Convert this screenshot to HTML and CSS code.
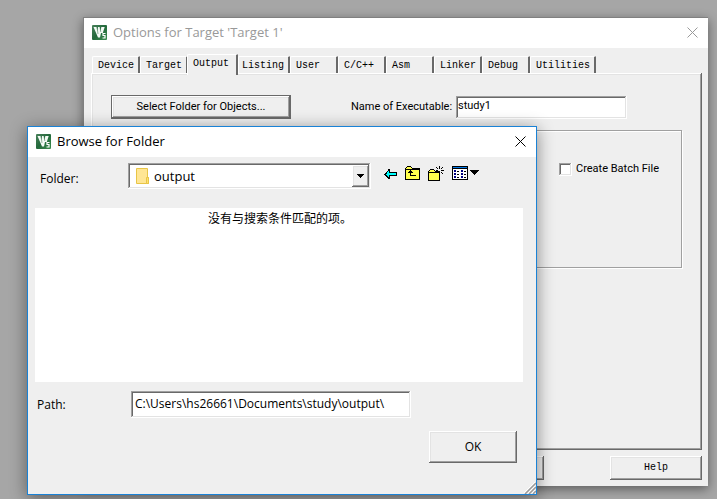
FILE: index.html
```html
<!DOCTYPE html>
<html lang="en">
<head>
<meta charset="utf-8">
<title>Options for Target</title>
<link rel="stylesheet" href="styles.css">
</head>
<body>
<svg class="defs" width="0" height="0" aria-hidden="true">
  <defs>
    <linearGradient id="green" x1="0" y1="0" x2="1" y2="1"><stop offset="0" stop-color="#48805a"/><stop offset=".5" stop-color="#23693b"/><stop offset="1" stop-color="#3d8f50"/></linearGradient>
    <symbol id="logo" viewBox="0 0 15 15">
      <rect width="15" height="15" rx="1" fill="url(#green)"/>
      <path fill="#f4faf5" d="M1.500 2h3.200l.5 4 .8-4h1.800l.9 4 .6-4h3.400L10.800 8H9l-1 4.500H6z"/>
      <path fill="none" stroke="#2c6d42" stroke-width=".5" d="M5 2l1 7M8 2l.8 5"/>
      <path fill="none" stroke="#fff" stroke-width="1.200" d="M13.500 8.500h-2.500v2h2v2.500h-2.500"/>
    </symbol>
  </defs>
</svg>
<main class="desktop">
  <section class="window options">
    <header class="titlebar">
      <svg class="logo" width="15" height="15" aria-hidden="true"><use href="#logo"/></svg>
      <h1 class="title">Options for Target 'Target 1'</h1>
      <button class="close" aria-label="Close"><svg width="11" height="11" viewBox="0 0 11 11"><path d="M.5.5l10 10M10.500.5l-10 10"/></svg></button>
    </header>
    <div class="tabs" role="tablist">
      <button class="tab" role="tab">Device</button>
      <button class="tab" role="tab">Target</button>
      <button class="tab active" role="tab" aria-selected="true">Output</button>
      <button class="tab listing" role="tab">Listing</button>
      <button class="tab" role="tab">User</button>
      <button class="tab" role="tab">C/C++</button>
      <button class="tab" role="tab">Asm</button>
      <button class="tab" role="tab">Linker</button>
      <button class="tab" role="tab">Debug</button>
      <button class="tab wide" role="tab">Utilities</button>
    </div>
    <div class="pane">
      <div class="output-row">
        <button class="select-folder">Select Folder for Objects...</button>
        <label class="name-label" for="exe">Name of Executable:</label>
        <input class="sunken exe" id="exe" type="text" value="study1">
      </div>
      <div class="group">
        <label class="batch"><input class="sunken check" type="checkbox"><span>Create Batch File</span></label>
      </div>
    </div>
    <footer class="footer">
      <button class="raised footer-button" aria-label="Defaults"></button>
      <button class="raised footer-button">Help</button>
    </footer>
  </section>

  <section class="window browse">
    <header class="titlebar">
      <svg class="logo" width="15" height="15" aria-hidden="true"><use href="#logo"/></svg>
      <h2 class="title">Browse for Folder</h2>
      <button class="close" aria-label="Close"><svg width="11" height="11" viewBox="0 0 11 11"><path d="M.5.5l10 10M10.500.5l-10 10"/></svg></button>
    </header>
    <div class="folder-row">
      <label class="folder-label" for="folder">Folder:</label>
      <div class="sunken combo">
        <svg class="folder-icon" width="13" height="16" viewBox="0 0 13 16" aria-hidden="true"><path fill="#ffe694" stroke="#e8c546" d="M.5.5h11v9h1v6H.5z"/><path fill="#ffe16f" stroke="#e8c546" d="M10.500 9.500h2v6h-2z"/></svg>
        <select class="folder-select" id="folder"><option>output</option></select>
        <span class="raised arrow" aria-hidden="true"><svg width="7" height="4" viewBox="0 0 7 4" shape-rendering="crispEdges"><path d="M0 0h7v1H6v1H5v1H4v1H3V3H2V2H1V1H0z"/></svg></span>
      </div>
      <div class="tools">
        <button class="tool" aria-label="Back"><svg width="13" height="15" viewBox="0 0 13 15" shape-rendering="crispEdges"><path d="M4 3h2v3h7v4H6v3H4v-1H3v-1H2v-1H1V9H0V8h1V7h1V6h1V5h1z"/><path fill="#0ff" d="M4 5h1v2h7v2H5v2H4v-1H3V9H2V8h1V6h1z"/></svg></button>
        <button class="tool" aria-label="Up one level"><svg width="15" height="15" viewBox="0 0 15 15" shape-rendering="crispEdges"><path d="M2 0h4v1h1v1h8v12H0V2h1V1h1z"/><path fill="#ffff4d" d="M2 1h4v1h1v1H1V2h1zM1 4h13v9H1z"/><path d="M5 4h1v1h1v1h1v1H6v2h5v1H5V7H3V6h1V5h1z"/></svg></button>
        <button class="tool" aria-label="New folder"><svg width="16" height="15" viewBox="0 0 16 15" shape-rendering="crispEdges"><path d="M2 3h4v1h1v1h5v10H0V5h1V4h1z"/><path fill="#ffff4d" d="M2 4h4v1h1v1H1V5h1zM1 7h10v7H1z"/><path d="M11 0h1v3h-1zM8 1h1v1H8zM9 2h1v1H9zM14 1h1v1h-1zM13 2h1v1h-1zM8 4h2v1H8zM13 4h3v1h-3zM11 5h1v3h-1zM13 6h1v1h-1zM14 7h1v1h-1zM9 6h1v1H9z"/></svg></button>
        <button class="tool" aria-label="View"><svg width="27" height="15" viewBox="0 0 27 15" shape-rendering="crispEdges"><path d="M0 0h16v14H0zM18 4h9v1h-1v1h-1v1h-1v1h-1v1h-1V8h-1V7h-1V6h-1V5h-1z"/><path fill="#0078e8" d="M1 1h14v1H1z"/><path fill="#fff" d="M1 3h14v10H1z"/><path fill="#000080" d="M2 4h2v2H2zM2 7h2v2H2zM2 10h2v2H2zM9 4h2v2H9zM9 7h2v2H9zM9 10h2v2H9z"/><path d="M5 5h2v1H5zM5 8h2v1H5zM5 11h2v1H5zM12 5h2v1h-2zM12 8h2v1h-2zM12 11h2v1h-2z"/></svg></button>
      </div>
    </div>
    <div class="list" lang="zh-CN">没有与搜索条件匹配的项。</div>
    <div class="path-row">
      <label class="path-label" for="path">Path:</label>
      <input class="sunken path" id="path" type="text" value="C:\Users\hs26661\Documents\study\output\">
    </div>
    <div class="actions"><button class="raised ok">OK</button></div>
    <svg class="grip" width="12" height="12" viewBox="0 0 12 12" aria-hidden="true"><path stroke="#fff" stroke-width="1" d="M0 11L11 0M4 11l7-7M8 11l3-3"/><path stroke="#999" stroke-width="1.500" d="M1 12L12 1M5 12l7-7M9 12l3-3"/></svg>
  </section>
</main>
</body>
</html>
```
FILE: styles.css
```css
* { box-sizing: border-box; }

body {
  margin: 0;
  background: #a6a6a6;
  color: #000;
  font: 12px/16px "Open Sans", "Noto Sans CJK SC", sans-serif;
}

button, input, select { font: inherit; color: inherit; margin: 0; border-radius: 0; }
button { padding: 0; border: 0; background: none; }
.defs { position: absolute; }

.desktop { position: relative; height: 100vh; overflow: hidden; }

.window { position: absolute; display: flex; flex-direction: column; background: #efefef; }
.options {
  inset: 17px 9px 13px 83px;
  border: 1px solid #808080;
  border-width: 1px 0 0 1px;
  box-shadow: 0 3px 10px rgba(0, 0, 0, .45);
}
.browse {
  inset: 126px 180px 4px 27px;
  border: 1px solid #1a82d6;
  box-shadow: 0 3px 16px rgba(0, 0, 0, .45);
}

.titlebar { display: flex; align-items: center; height: 30px; padding: 0 10px 2px 8px; gap: 6px; background: #fff; flex: none; }
.logo { flex: none; }
.title { flex: 1; margin: 0; font-size: 13px; font-weight: 400; line-height: 20px; }
.options .title { color: #999; }
.close { width: 11px; height: 11px; }
.close svg { display: block; fill: none; stroke: #000; }
.options .close svg { stroke: #999; }

.raised {
  background: #efefef;
  box-shadow: inset -1px -1px #696969, inset 1px 1px #fff, inset -2px -2px #a0a0a0, inset 2px 2px #e3e3e3;
}
.sunken {
  border: 0;
  background: #fff;
  box-shadow: inset -1px -1px #fff, inset 1px 1px #a0a0a0, inset -2px -2px #e3e3e3, inset 2px 2px #696969;
}

.tabs { display: flex; align-items: flex-end; height: 25px; margin: 0 8px; flex: none; }
.tab {
  flex: 0 1 48px;
  height: 17px;
  padding: 2px 0 0 5px;
  text-align: left;
  font: 10px/14px "Liberation Mono", monospace;
  white-space: nowrap;
  border-right: 2px solid #696969;
  border-top: 1px solid #fff;
  border-left: 1px solid #fff;
  border-radius: 2px 1px 0 0;
}
.tab.active {
  position: relative;
  flex-basis: 51px;
  height: 21px;
  margin: 0 0 -2px -1px;
  padding-bottom: 4px;
  background: #efefef;
}
.tab.listing { flex-basis: 52px; padding-left: 3px; }
.tab.wide { flex-basis: 66px; }

.pane {
  flex: 1;
  min-height: 0;
  margin: 0 6px 0 7px;
  padding: 22px 20px 0;
  font: 11px/16px Roboto, sans-serif;
  box-shadow: inset -1px -1px #696969, inset 1px 1px #fff, inset -2px -2px #a0a0a0, inset 2px 2px #e3e3e3;
}
.output-row { display: flex; align-items: center; }
.select-folder {
  width: 180px;
  height: 24px;
  background: #efefef;
  border: 1px solid #696969;
  box-shadow: inset -1px -1px #696969, inset 1px 1px #fff, inset -2px -2px #a0a0a0, inset 2px 2px #e3e3e3;
}
.name-label { margin-left: 60px; width: 105px; white-space: nowrap; }
.exe { width: 171px; height: 23px; padding: 0 2px 4px; }
.group { display: flex; justify-content: flex-end; height: 138px; margin-top: 11px; padding: 30px 22px 0 0; border: 1px solid #a0a0a0; box-shadow: 1px 1px #fff, inset 1px 1px #fff; }
.batch { display: flex; align-items: center; gap: 4px; height: 16px; }
.check { appearance: none; width: 13px; height: 13px; }

.footer { display: flex; justify-content: flex-end; gap: 66px; padding: 6px 6px 6px; flex: none; }
.footer-button { width: 92px; height: 24px; font: 10px/16px "Liberation Mono", monospace; }

.folder-row { display: flex; align-items: center; height: 27px; margin: 5px 0 0 12px; flex: none; }
.folder-label { width: 88px; padding-top: 6px; }
.combo { display: flex; align-items: center; width: 243px; height: 26px; padding: 2px 2px 2px 8px; }
.folder-icon { flex: none; }
.folder-select { flex: 1; align-self: stretch; appearance: none; border: 0; padding: 0 0 0 5px; background: none; font-size: 13px; }
.arrow { display: flex; align-items: center; justify-content: center; align-self: stretch; width: 17px; }
.tools { display: flex; gap: 8px; margin: 0 0 4px 13px; }
.tool svg { display: block; }

.list { flex: 1; min-height: 0; margin: 19px 13px 0 7px; padding: 3px 0 3px 2px; background: #fff; text-align: center; }
.path-row { display: flex; align-items: center; margin: 9px 0 0 9px; flex: none; }
.path-label { width: 94px; }
.path { width: 280px; height: 27px; padding: 0 4px 2px; }
.actions { display: flex; justify-content: flex-end; padding: 13px 19px 31px 0; flex: none; }
.ok { width: 88px; height: 32px; }
.grip { position: absolute; right: 0; bottom: 0; }
```
